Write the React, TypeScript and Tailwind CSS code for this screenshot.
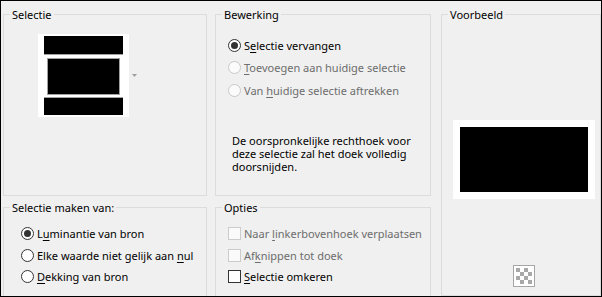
import type { ReactNode } from "react";

const font = { fontFamily: '"Segoe UI", "Noto Sans", sans-serif' };

function GroupBox({
  title,
  className,
  children,
}: {
  title: string;
  className?: string;
  children?: ReactNode;
}) {
  return (
    <fieldset className={`border border-[#dcdcdc] ${className ?? ""}`}>
      <legend className="ml-[6px] whitespace-nowrap px-[2px] text-[11px] leading-[15px] text-black">{title}</legend>
      {children}
    </fieldset>
  );
}

function Radio({ checked, disabled }: { checked?: boolean; disabled?: boolean }) {
  return (
    <svg width="13" height="13" viewBox="0 0 13 13" className="shrink-0">
      <circle
        cx="6.5"
        cy="6.5"
        r="6"
        fill={disabled ? "#fbfbfb" : "#ffffff"}
        stroke={disabled ? "#c8c8c8" : "#333333"}
      />
      {checked ? <circle cx="6.5" cy="6.5" r="3.5" fill="#333333" /> : null}
    </svg>
  );
}

function Check({ disabled }: { disabled?: boolean }) {
  return (
    <span
      className={`block h-[13px] w-[13px] shrink-0 border ${
        disabled ? "border-[#cccccc] bg-[#fafafa]" : "border-[#333333] bg-white"
      }`}
    />
  );
}

function U({ children }: { children: ReactNode }) {
  return <span className="underline underline-offset-[2px]">{children}</span>;
}

function Option({
  control,
  disabled,
  tight,
  children,
}: {
  control: ReactNode;
  disabled?: boolean;
  tight?: boolean;
  children: ReactNode;
}) {
  return (
    <div
      className={`flex items-center gap-[3px] whitespace-nowrap text-[11px] leading-[15px] ${
        tight ? "h-[21.5px]" : "h-[22.5px]"
      } ${disabled ? "text-[#6d6d6d]" : "text-black"}`}
    >
      {control}
      <span>{children}</span>
    </div>
  );
}

function SelectionThumb() {
  return (
    <svg width="91" height="83" viewBox="0 0 91 83">
      <rect x="0" y="0" width="91" height="83" fill="#ffffff" />
      <rect x="6" y="2" width="79" height="18" fill="#000000" />
      <rect x="6" y="20" width="79" height="1" fill="#a0a0a0" />
      <rect x="9" y="24" width="73" height="37" fill="#a0a0a0" />
      <rect x="10" y="25" width="71" height="35" fill="#000000" />
      <rect x="6" y="63" width="79" height="1" fill="#a0a0a0" />
      <rect x="6" y="64" width="79" height="17" fill="#000000" />
    </svg>
  );
}

function CheckerIcon() {
  const cells = [];
  for (let r = 0; r < 4; r++) {
    for (let c = 0; c < 4; c++) {
      if ((r + c) % 2 === 0) {
        cells.push(<rect key={`${r}-${c}`} x={3 + c * 4} y={3 + r * 4} width="4" height="4" fill="#a8a8a8" />);
      }
    }
  }
  return (
    <svg width="22" height="22" viewBox="0 0 22 22">
      <rect x="0.5" y="0.5" width="21" height="21" fill="#ffffff" stroke="#a6a6a6" />
      {cells}
    </svg>
  );
}

export default function App() {
  return (
    <div className="h-[297px] w-[602px] overflow-hidden border border-black bg-[#f0f0f0]" style={font}>
      <div className="flex pl-[2px] pt-[6px]">
        <div className="flex w-[204px] flex-col">
          <GroupBox title="Selectie" className="h-[189px]">
            <div className="flex items-start pl-[34px] pt-[12px]">
              <SelectionThumb />
              <svg width="5" height="3" viewBox="0 0 5 3" className="ml-[3px] mt-[40px]">
                <path d="M0 0h5L2.5 3z" fill="#a0a0a0" />
              </svg>
            </div>
          </GroupBox>
          <GroupBox title="Selectie maken van:" className="mt-[4px] h-[120px]">
            <div className="pl-[17px] pt-[8px]">
              <Option tight control={<Radio checked />}>
                L<U>u</U>minantie van bron
              </Option>
              <Option tight control={<Radio />}>
                Elke waarde niet gelijk aan <U>n</U>ul
              </Option>
              <Option tight control={<Radio />}>
                <U>D</U>ekking van bron
              </Option>
            </div>
          </GroupBox>
        </div>

        <div className="ml-[8px] flex w-[216px] flex-col">
          <GroupBox title="Bewerking" className="h-[189px]">
            <div className="pl-[12px] pt-[12px]">
              <Option control={<Radio checked />}>
                S<U>e</U>lectie vervangen
              </Option>
              <Option control={<Radio disabled />} disabled>
                <U>T</U>oevoegen aan huidige selectie
              </Option>
              <Option control={<Radio disabled />} disabled>
                Van <U>h</U>uidige selectie aftrekken
              </Option>
              <p className="mt-[32px] whitespace-nowrap pl-[4px] text-[11px] leading-[13px] text-black">
                De oorspronkelijke rechthoek voor
                <br />
                deze selectie zal het doek volledig
                <br />
                doorsnijden.
              </p>
            </div>
          </GroupBox>
          <GroupBox title="Opties" className="mt-[4px] h-[120px]">
            <div className="pl-[12px] pt-[8px]">
              <Option tight control={<Check disabled />} disabled>
                Naar <U>l</U>inkerbovenhoek verplaatsen
              </Option>
              <Option tight control={<Check disabled />} disabled>
                Af<U>k</U>nippen tot doek
              </Option>
              <Option tight control={<Check />}>
                <U>S</U>electie omkeren
              </Option>
            </div>
          </GroupBox>
        </div>

        <div className="ml-[10px] flex w-[160px] flex-col">
          <GroupBox title="Voorbeeld" className="h-[289px]">
            <div className="flex flex-col items-start pl-[11px] pt-[98px]">
              <div className="flex h-[79px] w-[142px] items-center justify-center bg-white">
                <div className="h-[65px] w-[128px] bg-black" />
              </div>
              <div className="mt-[66px] flex w-[142px] justify-center">
                <CheckerIcon />
              </div>
            </div>
          </GroupBox>
        </div>
      </div>
    </div>
  );
}
